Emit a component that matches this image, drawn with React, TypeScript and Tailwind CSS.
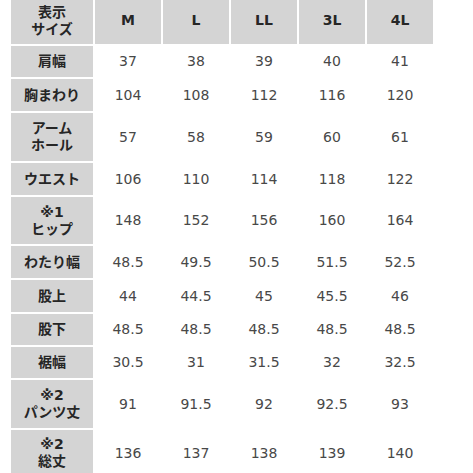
import React from 'react'

const sizes = ['M', 'L', 'LL', '3L', '4L']

const rows: { label: string[]; h: string; values: string[] }[] = [
  { label: ['肩幅'], h: 'h-[31px]', values: ['37', '38', '39', '40', '41'] },
  { label: ['胸まわり'], h: 'h-[32px]', values: ['104', '108', '112', '116', '120'] },
  { label: ['アーム', 'ホール'], h: 'h-[48px]', values: ['57', '58', '59', '60', '61'] },
  { label: ['ウエスト'], h: 'h-[32px]', values: ['106', '110', '114', '118', '122'] },
  { label: ['※1', 'ヒップ'], h: 'h-[47px]', values: ['148', '152', '156', '160', '164'] },
  { label: ['わたり幅'], h: 'h-[32px]', values: ['48.5', '49.5', '50.5', '51.5', '52.5'] },
  { label: ['股上'], h: 'h-[32px]', values: ['44', '44.5', '45', '45.5', '46'] },
  { label: ['股下'], h: 'h-[31px]', values: ['48.5', '48.5', '48.5', '48.5', '48.5'] },
  { label: ['裾幅'], h: 'h-[31px]', values: ['30.5', '31', '31.5', '32', '32.5'] },
  { label: ['※2', 'パンツ丈'], h: 'h-[48px]', values: ['91', '91.5', '92', '92.5', '93'] },
  { label: ['※2', '総丈'], h: 'h-[46px]', values: ['136', '137', '138', '139', '140'] },
]

const font = { fontFamily: '"DejaVu Sans", "Noto Sans CJK JP", sans-serif' }

function Head({ lines, className = '' }: { lines: string[]; className?: string }) {
  return (
    <div
      className={`flex flex-col items-center justify-center bg-[#d4d4d4] text-[14px] font-bold leading-[17px] text-[#262626] ${className}`}
    >
      {lines.map((l) => (
        <span key={l}>{l}</span>
      ))}
    </div>
  )
}

export default function App() {
  return (
    <div className="w-[473px] h-[473px] overflow-hidden bg-white" style={font}>
      <div className="ml-[11px] -mt-[3px] grid grid-cols-[82px_repeat(5,66px)] gap-[2px]">
        <Head lines={['表示', 'サイズ']} className="h-[47px]" />
        {sizes.map((s) => (
          <Head key={s} lines={[s]} className="h-[47px]" />
        ))}
        {rows.map((r) => (
          <React.Fragment key={r.label.join('')}>
            <Head lines={r.label} className={r.h} />
            {r.values.map((v, i) => (
              <div
                key={i}
                className={`flex items-center justify-center text-[14px] text-[#484848] ${r.h}`}
              >
                {v}
              </div>
            ))}
          </React.Fragment>
        ))}
      </div>
    </div>
  )
}
